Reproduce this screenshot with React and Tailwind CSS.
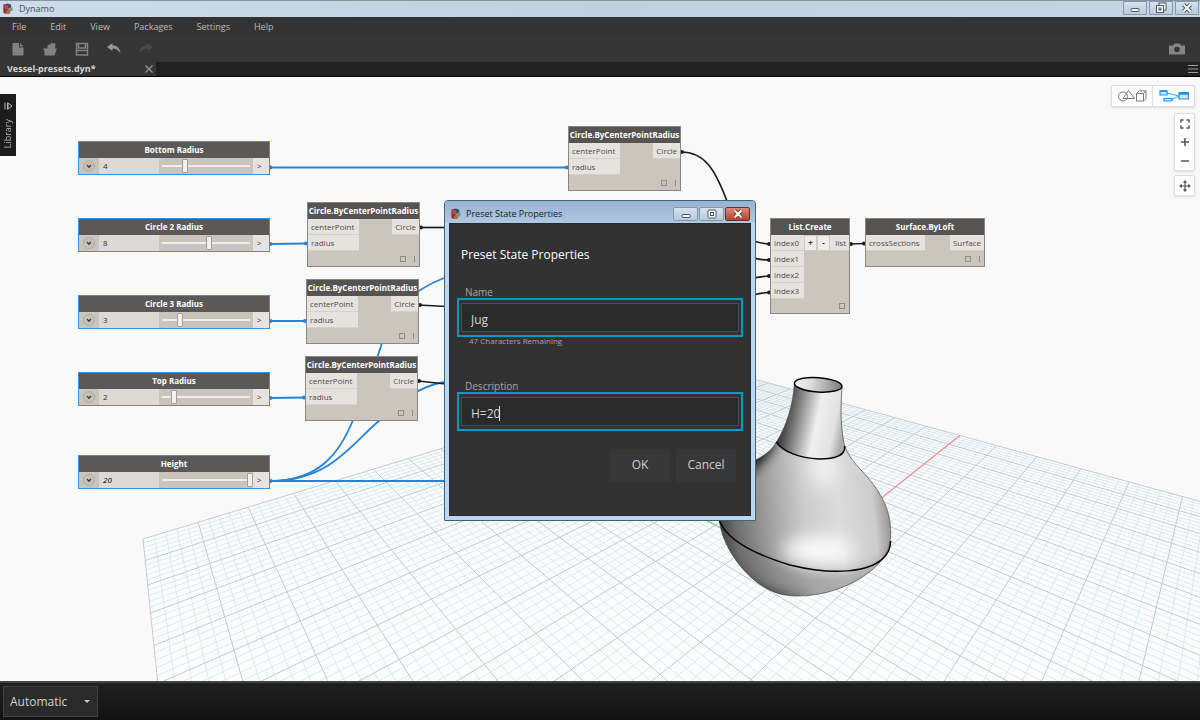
import React, { useState } from "react";

const GRID = { x: 143, y: 539, xu: 65.6, xv: -6.5, yu: 10.63, yv: -12.1, wu: 0.0524, wv: -0.06 };

function project(u, v) {
  const w = 1 + GRID.wu * u + GRID.wv * v;
  const x = (GRID.x + GRID.xu * u + GRID.xv * v) / w;
  const y = (GRID.y + GRID.yu * u + GRID.yv * v) / w;
  return `${x.toFixed(1)},${y.toFixed(1)}`;
}

function gridPath(major) {
  let d = "";
  for (let i = 0; i <= 100; i++) {
    if ((i % 5 === 0) !== major) continue;
    const n = i / 5;
    const vEnd = Math.min(20, (0.75 + GRID.wu * n) / 0.06);
    const uStart = Math.max(0, (0.06 * n - 0.75) / GRID.wu);
    d += `M${project(n, 0)}L${project(n, vEnd)}M${project(uStart, n)}L${project(20, n)}`;
  }
  return d;
}

const MINOR = gridPath(false);
const MAJOR = gridPath(true);

const BODY =
  "M794.3,383.5 C793.5,404 786,427 776.5,442 C766,460 752,457 736,475 C722,491 718,510 719.5,521 C722,549 752,590 785,595 C812,599 846,590 868,573 C883,562 890.7,550 890.7,534 C891,508 880,490 860,469 C849,457 845,449 843.5,441 C840,420 841,402 842,387.5 Z";

function Scene() {
  return (
    <svg className="absolute inset-0 h-full w-full" aria-hidden="true">
      <defs>
        <linearGradient id="body" gradientUnits="userSpaceOnUse" x1="719" y1="530" x2="891" y2="512">
          <stop offset="0" stopColor="#3c3c3c" />
          <stop offset="0.1" stopColor="#6e6e6e" />
          <stop offset="0.28" stopColor="#9c9c9c" />
          <stop offset="0.5" stopColor="#cccccc" />
          <stop offset="0.7" stopColor="#dcdcdc" />
          <stop offset="0.9" stopColor="#cdcdcd" />
          <stop offset="1" stopColor="#8e8e8e" />
        </linearGradient>
        <linearGradient id="neck" gradientUnits="userSpaceOnUse" x1="780" y1="406" x2="846" y2="420">
          <stop offset="0" stopColor="#1c1c1c" />
          <stop offset="0.25" stopColor="#767676" />
          <stop offset="0.58" stopColor="#efefef" />
          <stop offset="0.85" stopColor="#e2e2e2" />
          <stop offset="1" stopColor="#aaaaaa" />
        </linearGradient>
        <linearGradient id="mouth" x1="0" x2="1" y1="0" y2="0">
          <stop offset="0" stopColor="#f4f4f4" />
          <stop offset="0.35" stopColor="#dcdcdc" />
          <stop offset="1" stopColor="#7c7c7c" />
        </linearGradient>
        <filter id="soft" x="-60%" y="-60%" width="220%" height="220%">
          <feGaussianBlur stdDeviation="9" />
        </filter>
        <filter id="softer" x="-60%" y="-60%" width="220%" height="220%">
          <feGaussianBlur stdDeviation="6" />
        </filter>
        <clipPath id="vase">
          <path d={BODY} />
        </clipPath>
      </defs>
      <g transform="translate(0,-77)">
        <path d={`M${project(0, 0)}L${project(20, 0)}L${project(20, 20)}L${project(14, 20)}L${project(0, 12.5)}Z`} fill="#fbfcfc" />
        <path d={MINOR} fill="none" stroke="#d3e4ec" strokeWidth="0.8" />
        <path d={MAJOR} fill="none" stroke="#c0cbd0" strokeWidth="1" />
        <path d={`M${project(10, 10)}L${project(20, 10)}`} stroke="#f48d96" strokeWidth="1.2" />
        <path d={`M${project(10, 10)}L${project(10, 0)}`} stroke="#7fcf86" strokeWidth="1.2" />

        <g clipPath="url(#vase)">
          <path d={BODY} fill="url(#body)" />
          <path d="M716,520 C728,544 760,558 790,567 C830,577 872,576 896,545 L890,610 H710Z" fill="#6a6a6a" opacity="0.4" filter="url(#softer)" />
          <path d="M714,535 C735,580 770,594 815,598 L720,612Z" fill="#222" opacity="0.7" filter="url(#softer)" />
          <path d="M778,438 C770,460 756,466 742,482 L712,510 L716,440Z" fill="#000" opacity="0.85" filter="url(#softer)" />
          <ellipse cx="822" cy="468" rx="14" ry="20" fill="#fff" opacity="0.65" filter="url(#soft)" />
          <ellipse cx="818" cy="550" rx="36" ry="13" fill="#fff" opacity="0.95" filter="url(#soft)" />
          <path d="M794.3,383 C793.5,404 786,427 776.5,442 C783,452 800,458 819,459 C836,459 846,455 844.6,446 L842,387Z" fill="url(#neck)" />
        </g>
        <path d={BODY} fill="none" stroke="#444" strokeWidth="0.7" />
        <path d="M719.5,521 C728,542 760,556 790,565 C830,575 872,574 886,555 C890,550 890.5,545 890.7,541" fill="none" stroke="#050505" strokeWidth="1.5" />
        <path d="M776.3,442 C783,452 800,458 819,459 C836,459 846,455 844.6,446" fill="none" stroke="#050505" strokeWidth="1.5" />
        <ellipse cx="818.2" cy="384.8" rx="23.8" ry="7.2" transform="rotate(4 818 385)" fill="url(#mouth)" stroke="#050505" strokeWidth="1.5" />

        <g fill="none" stroke="#2583d8" strokeWidth="1.8">
          <path d="M270,167.500H568" />
          <path d="M270,244L307,243.5" />
          <path d="M270,321L306,321" />
          <path d="M270,398L305,397.5" />
          <path d="M270,481H460" />
          <path d="M270,481C320,481 340,452 353,420S372,375 382,343C392,312 410,291 444,278" />
          <path d="M270,481C330,481 350,445 380,420C395,407 415,387 444,382" />
        </g>
        <g fill="#2583d8">
          {[167.5, 244, 321, 398, 481].map((y) => (
            <circle key={y} cx="270.5" cy={y} r="2" />
          ))}
          <circle cx="567" cy="167.5" r="2" />
          <circle cx="306" cy="243.5" r="2" />
          <circle cx="305" cy="321" r="2" />
          <circle cx="304" cy="397.5" r="2" />
        </g>
        <g fill="none" stroke="#1d1d1d" strokeWidth="1.7">
          <path d="M681,152C704,152 715,168 728,204" />
          <path d="M420,227.5L446,227.5" />
          <path d="M419,305L446,306.5" />
          <path d="M418,381L446,384" />
          <path d="M754,241C760,243 764,244 770,244" />
          <path d="M754,258C760,260 764,260 770,260" />
          <path d="M754,278C760,277 764,276 770,276" />
          <path d="M754,295C760,293 764,292.500 770,292.500" />
          <path d="M849,244L865,243.500" />
        </g>
        <g fill="#1d1d1d">
          <circle cx="682" cy="152" r="2" />
          <circle cx="421" cy="227.5" r="2" />
          <circle cx="420" cy="305" r="2" />
          <circle cx="419" cy="381" r="2" />
          {[244, 260, 276, 292.5].map((y) => (
            <circle key={y} cx="769" cy={y} r="2" />
          ))}
          <circle cx="851" cy="244" r="2" />
          <circle cx="864" cy="243.500" r="2" />
        </g>
      </g>
    </svg>
  );
}

function AppIcon() {
  return (
    <svg viewBox="0 0 12 13" className="h-3 w-3 shrink-0" aria-hidden="true">
      <path d="M1 1.500L6 .5V7L3 12 1 10.500Z" fill="#9c2a30" />
      <path d="M6 .5L9.500 2V5L6 6.500Z" fill="#3d4f6f" />
      <path d="M6 6.500L11 4.500V8L8 9.500 6 9Z" fill="#6f9a80" />
      <path d="M3 12L6 7 9 9 7.500 12Z" fill="#a8703c" />
      <path d="M1 1.500L6 3V7L3 6.500Z" fill="#c2474f" />
    </svg>
  );
}

const SLIDERS = [
  { name: "Bottom Radius", value: 4, max: 15, at: "left-[78px] top-[64px]" },
  { name: "Circle 2 Radius", value: 8, max: 15, at: "left-[78px] top-[141px]" },
  { name: "Circle 3 Radius", value: 3, max: 15, at: "left-[78px] top-[218px]" },
  { name: "Top Radius", value: 2, max: 15, at: "left-[78px] top-[295px]" },
  { name: "Height", value: 20, max: 20, italic: true, at: "left-[78px] top-[378px]" },
];

function SliderNode({ name, value, max, italic, at }) {
  const [current, setCurrent] = useState(value);
  return (
    <section className={`absolute w-48 border border-[#3b93e0] bg-[#cac4bc] ${at}`}>
      <h2 className="h-4 bg-[#5b5957] text-center text-[8px] leading-4 font-bold text-white">{name}</h2>
      <div className="flex h-4 text-[8px] text-[#2c2c2c]">
        <button aria-label={`${name} settings`} className="flex w-5 items-center justify-center">
          <svg viewBox="0 0 12 12" className="h-3 w-3">
            <circle cx="6" cy="6" r="5.5" fill="#c6c0b9" stroke="#aaa49d" strokeWidth="0.7" />
            <path d="M4 5L6 7.200 8 5" fill="none" stroke="#3a3a3a" strokeWidth="1.300" />
          </svg>
        </button>
        <output className={`w-15 bg-[#dddad6] pl-1 leading-4 ${italic ? "italic text-black" : ""}`}>{current}</output>
        <input
          type="range"
          aria-label={name}
          min="0"
          max={max}
          value={current}
          onChange={(e) => setCurrent(Number(e.target.value))}
          className="h-4 min-w-0 flex-1 appearance-none bg-[linear-gradient(#f0eeec,#f0eeec)] bg-[length:88px_2px] bg-center bg-no-repeat [&::-webkit-slider-thumb]:h-[14px] [&::-webkit-slider-thumb]:w-[6px] [&::-webkit-slider-thumb]:appearance-none [&::-webkit-slider-thumb]:rounded-[1px] [&::-webkit-slider-thumb]:border [&::-webkit-slider-thumb]:border-[#a19d99] [&::-webkit-slider-thumb]:bg-[#f1f0ef]"
        />
        <span className="w-4 bg-[#e5e2df] pl-1 leading-4">&gt;</span>
      </div>
    </section>
  );
}

function Port({ children, className = "" }) {
  return (
    <div className={`h-4 border-b border-[#d5d0ca] bg-[#e6e3df] px-[3px] text-[8px] leading-4 whitespace-nowrap text-[#4a4a4a] ${className}`}>
      {children}
    </div>
  );
}

function NodeCard({ title, at, children, lacing = true }) {
  return (
    <section className={`absolute flex flex-col border border-[#8a8681] bg-[#cac5bd] ${at}`}>
      <h2 className="h-4 shrink-0 bg-[#565452] text-center text-[8px] leading-4 font-bold whitespace-nowrap text-white">{title}</h2>
      <div className="flex items-start justify-between">{children}</div>
      <div className="mt-auto flex h-[14px] items-center justify-end gap-2 pr-1">
        <input type="checkbox" aria-label={`${title} preview`} className="h-[6px] w-[6px] appearance-none border border-[#8f8b86]" />
        {lacing && <span className="h-[6px] w-px bg-[#8f8b86]" />}
      </div>
    </section>
  );
}

const CIRCLES = [
  "left-[568px] top-[49px] w-[113px] h-[65px]",
  "left-[307px] top-[125px] w-[113px] h-[65px]",
  "left-[306px] top-[202px] w-[113px] h-[65px]",
  "left-[305px] top-[279px] w-[113px] h-[65px]",
];

function CircleNode({ at }) {
  return (
    <NodeCard title="Circle.ByCenterPointRadius" at={at}>
      <div className="w-[51px]">
        <Port>centerPoint</Port>
        <Port>radius</Port>
      </div>
      <Port>Circle</Port>
    </NodeCard>
  );
}

const TOOLS = [
  {
    label: "New",
    tone: "text-[#828282]",
    art: <path d="M1.500 1H8V5.500H12.500V13.500H1.500ZM9 1L12.500 4.500H9Z" fill="currentColor" />,
  },
  {
    label: "Open",
    tone: "text-[#828282]",
    art: <path d="M4.500 3L7.500 2.500 8 1 12.500 1.500 12 6.500H14L11.500 13.500H1.500V9.500L0 6.500H4.500Z" fill="currentColor" />,
  },
  {
    label: "Save",
    tone: "text-[#828282]",
    art: <path d="M1.500 1.500H12.500V13H1.500ZM3.500 1.500V6H10.500V1.500M1.500 8.500H12.500" fill="none" stroke="currentColor" strokeWidth="1.500" />,
  },
  {
    label: "Undo",
    tone: "text-[#9a9a9a]",
    art: <path d="M0 5L5.500 1V3.500C10 3.500 13 6 13.500 11.500C11.500 8 9.500 6.500 5.500 6.500V9Z" fill="currentColor" />,
  },
  {
    label: "Redo",
    tone: "text-[#4b4b4b]",
    art: <path d="M14 5L8.500 1V3.500C4 3.500 1 6 .5 11.500C2.500 8 4.500 6.500 8.500 6.500V9Z" fill="currentColor" />,
  },
];

const WINDOW_BUTTON = "flex items-center justify-center border border-[#8797ab] bg-linear-to-b from-[#d6e2ee] to-[#b9cadc]";

function Glyph({ kind, stroke = "#4d5765" }) {
  return (
    <svg viewBox="0 0 12 12" className="h-3 w-3" fill="none" stroke={stroke} aria-hidden="true">
      {kind === "min" && <rect x="2" y="6.500" width="8" height="3" rx="0.500" fill="#fff" />}
      {kind === "max" && (
        <>
          <rect x="2" y="2" width="8" height="8" rx="1" fill="#fff" />
          <rect x="4.500" y="4.500" width="3" height="3" />
        </>
      )}
      {kind === "restore" && (
        <>
          <rect x="4" y="1" width="7" height="7" fill="#fff" />
          <rect x="1.500" y="3.500" width="7" height="7" fill="#fff" />
          <rect x="4" y="6" width="2" height="2" />
        </>
      )}
      {kind === "close" && (
        <>
          <path d="M2.500 2.500L9.500 9.500M9.500 2.500L2.500 9.500" strokeWidth="4" />
          <path d="M2.500 2.500L9.500 9.500M9.500 2.500L2.500 9.500" stroke="#fff" strokeWidth="2" />
        </>
      )}
    </svg>
  );
}

function Header() {
  return (
    <header className="shrink-0">
      <div className="flex h-[17px] items-center border-t border-[#8a939c] bg-linear-to-r from-[#cddcea] via-[#bfd0e1] to-[#c4d5e6] pr-px pl-[2px]">
        <AppIcon />
        <span className="ml-[5px] text-[9px] leading-4 text-[#44505c]">Dynamo</span>
        <div className="ml-auto flex h-[14px] gap-[2px] self-start">
          <button aria-label="Minimize" className={`w-6 ${WINDOW_BUTTON}`}><Glyph kind="min" /></button>
          <button aria-label="Restore" className={`w-6 ${WINDOW_BUTTON}`}><Glyph kind="restore" /></button>
          <button aria-label="Close" className={`w-6 ${WINDOW_BUTTON}`}><Glyph kind="close" /></button>
        </div>
      </div>
      <nav className="flex h-[18px] items-center gap-6 bg-[#333] pt-px pl-3 text-[9px] text-[#bcbcbc]">
        {["File", "Edit", "View", "Packages", "Settings", "Help"].map((m) => (
          <button key={m}>{m}</button>
        ))}
      </nav>
      <div className="flex h-[27px] items-center gap-[18px] bg-[#353535] pt-px pr-[14px] pl-[11px]">
        {TOOLS.map((t) => (
          <button key={t.label} aria-label={t.label} className={t.tone}>
            <svg viewBox="0 0 14 14" className="h-[14px] w-[14px]">{t.art}</svg>
          </button>
        ))}
        <button aria-label="Export image" className="ml-auto text-[#858585]">
          <svg viewBox="0 0 18 12" className="h-3 w-[18px]">
            <path d="M1 2.500H5L6.500 .5H11.500L13 2.500H17V11.500H1Z" fill="currentColor" />
            <circle cx="9" cy="6.500" r="2.800" fill="#353535" />
          </svg>
        </button>
      </div>
      <div className="flex h-[15px] items-center border-b border-black bg-[#212121]">
        <div className="flex h-full w-[156px] items-center justify-between bg-[#353535] pr-[2px] pl-[7px]">
          <button className="text-[9px] leading-[14px] font-bold text-[#d4d4d4]">Vessel-presets.dyn*</button>
          <button aria-label="Close tab" className="text-[#969696]">
            <svg viewBox="0 0 10 10" className="h-[10px] w-[10px]">
              <path d="M1.500 1.500L8.500 8.500M8.500 1.500L1.500 8.500" stroke="currentColor" strokeWidth="1.300" />
            </svg>
          </button>
        </div>
        <button aria-label="Tab list" className="mr-[2px] ml-auto text-[#9a9a9a]">
          <svg viewBox="0 0 10 10" className="h-[10px] w-[10px]">
            <path d="M0 1.500H10M0 5H10M0 8.500H10" stroke="currentColor" strokeWidth="1" />
          </svg>
        </button>
      </div>
    </header>
  );
}

function ViewControls() {
  const panel = "flex flex-col items-center rounded-[2px] border border-[#dedede] bg-white shadow-sm w-[21px]";
  return (
    <div className="absolute top-2 right-[5px] flex flex-col items-end">
      <div className="flex h-[22px] rounded-[2px] border border-[#dedede] bg-white shadow-sm">
        <button aria-label="Geometry view" className="flex w-[41px] items-center justify-center border-r border-[#dedede]">
          <svg viewBox="0 0 30 14" className="h-[14px] w-[30px]" fill="none" stroke="#777" strokeWidth="1">
            <circle cx="6" cy="7.500" r="4.500" />
            <path d="M11.500 1.500L17.500 9.500H6ZM19.500 4.500H26.500V12H19.500ZM19.500 4.500L22 1.800H29L26.500 4.500M29 1.800V9.500L26.500 12" />
          </svg>
        </button>
        <button aria-label="Graph view" className="flex w-[41px] items-center justify-center">
          <svg viewBox="0 0 30 14" className="h-[14px] w-[30px]" fill="none" stroke="#1a93ee" strokeWidth="1.200">
            <path d="M1 1.800H8V6H1ZM5 9.500H13V12H5ZM20 3.500H29.500V10H20Z" fill="#cfe8fb" />
            <path d="M1 2.200H8M20 4H29.500M20 5H29.500" strokeWidth="1.600" />
            <path d="M8 4L20 7M13 10.500L20 7" strokeWidth="0.900" />
          </svg>
        </button>
      </div>
      <div className={`mt-[6px] h-[58px] justify-around pt-px ${panel}`}>
        <button aria-label="Fit to screen">
          <svg viewBox="0 0 10 10" className="h-[10px] w-[10px]" fill="none" stroke="#555" strokeWidth="1.500">
            <path d="M1 3.500V1H3.500M6.500 1H9V3.500M9 6.500V9H6.500M3.500 9H1V6.500" />
          </svg>
        </button>
        <button aria-label="Zoom in">
          <svg viewBox="0 0 10 10" className="h-[10px] w-[10px]" stroke="#555" strokeWidth="1.600">
            <path d="M1 5H9M5 1V9" />
          </svg>
        </button>
        <button aria-label="Zoom out">
          <svg viewBox="0 0 10 10" className="h-[10px] w-[10px]" stroke="#555" strokeWidth="1.500">
            <path d="M1 5H9" />
          </svg>
        </button>
      </div>
      <div className={`mt-1 h-[21px] justify-center ${panel}`}>
        <button aria-label="Pan">
          <svg viewBox="0 0 12 12" className="h-3 w-3" fill="#555" stroke="#555">
            <path d="M6 2V10M2 6H10" strokeWidth="1.200" />
            <path d="M6 0L8.200 2.800H3.800ZM6 12L8.200 9.200H3.800ZM0 6L2.800 3.800V8.200ZM12 6L9.200 3.800V8.200Z" stroke="none" />
          </svg>
        </button>
      </div>
    </div>
  );
}

function FramedInput({ id, value, onChange, caret }) {
  return (
    <div className="relative -mx-px border-2 border-[#0898c6] px-[2px] py-[3px]">
      <input
        id={id}
        value={value}
        onChange={onChange}
        className="block h-[29px] w-full border border-[#4c4c4c] bg-[#2a2a2a] px-[9px] pt-1 text-[12px] text-[#d6d6d6] outline-none"
      />
      {caret && <span className="absolute top-3 left-10 h-[15px] w-px bg-[#e8e8e8]" />}
    </div>
  );
}

function PresetDialog() {
  const [name, setName] = useState("Jug");
  const [description, setDescription] = useState("H=20");
  return (
    <div className="pointer-events-none fixed inset-0 flex items-center justify-center">
      <div
        role="dialog"
        aria-labelledby="preset-title"
        className="pointer-events-auto w-[312px] rounded-t-[4px] border border-[#3f6672] bg-[#bad6f0] px-1 pb-1"
      >
        <div className="-mx-1 flex h-[22px] items-center rounded-t-[3px] bg-linear-to-b from-[#97b3d2] to-[#b1c8e2] px-[5px] pt-1">
          <AppIcon />
          <span className="ml-1 flex-1 text-[9px] text-[#15202b]">Preset State Properties</span>
          <div className="flex h-[14px] gap-px">
            <button aria-label="Minimize dialog" className={`w-[25px] rounded-[2px] ${WINDOW_BUTTON}`}><Glyph kind="min" /></button>
            <button aria-label="Maximize dialog" className={`w-[25px] rounded-[2px] ${WINDOW_BUTTON}`}><Glyph kind="max" /></button>
            <button aria-label="Close dialog" className="flex w-[25px] items-center justify-center rounded-[2px] border border-[#6f2a25] bg-linear-to-b from-[#dd8a7c] to-[#bd3e2b]">
              <Glyph kind="close" stroke="#6e3a38" />
            </button>
          </div>
        </div>
        <form className="flex flex-col border border-[#1f2a33] bg-[#323232] px-2 pb-[33px]" onSubmit={(e) => e.preventDefault()}>
          <h1 id="preset-title" className="mt-[22px] ml-[3px] text-[12px] leading-[18px] text-white">Preset State Properties</h1>
          <label htmlFor="preset-name" className="mt-[22px] ml-[7px] text-[10px] leading-3 text-[#a6a6a6]">Name</label>
          <FramedInput id="preset-name" value={name} onChange={(e) => setName(e.target.value)} />
          <p className="ml-[11px] text-[8px] leading-2 text-[#a6a6a6]">{50 - name.length} Characters Remaining</p>
          <label htmlFor="preset-description" className="mt-[35px] ml-[7px] text-[10px] leading-3 text-[#a6a6a6]">Description</label>
          <FramedInput id="preset-description" value={description} onChange={(e) => setDescription(e.target.value)} caret />
          <div className="mt-[18px] mr-[6px] flex justify-end gap-[6px]">
            <button type="submit" className="h-[33px] w-15 bg-[#373737] text-[12px] text-[#cfcfcf]">OK</button>
            <button type="button" className="h-[33px] w-15 bg-[#373737] text-[12px] text-[#cfcfcf]">Cancel</button>
          </div>
        </form>
      </div>
    </div>
  );
}

export default function App() {
  return (
    <div className="flex h-screen flex-col overflow-hidden bg-[#f9f9f9] font-['Open_Sans','Noto_Sans',sans-serif]">
      <Header />
      <main className="relative flex-1 overflow-hidden">
        <Scene />
        {SLIDERS.map((s) => (
          <SliderNode key={s.name} {...s} />
        ))}
        {CIRCLES.map((at) => (
          <CircleNode key={at} at={at} />
        ))}
        <NodeCard title="List.Create" at="left-[770px] top-[141px] w-[80px] h-[96px]" lacing={false}>
          <div className="w-[33px]">
            {[0, 1, 2, 3].map((i) => (
              <Port key={i}>index{i}</Port>
            ))}
          </div>
          <div className="flex flex-1">
            <button aria-label="Add input" className="w-[13px] border border-[#cfcac4] bg-[#efedeb] text-[8px] leading-3 font-bold text-[#333]">+</button>
            <button aria-label="Remove input" className="w-[13px] border border-[#cfcac4] bg-[#efedeb] text-[8px] leading-3 font-bold text-[#333]">-</button>
            <Port className="flex-1 text-right">list</Port>
          </div>
        </NodeCard>
        <NodeCard title="Surface.ByLoft" at="left-[865px] top-[141px] w-[120px] h-[49px]">
          <Port className="w-[59px]">crossSections</Port>
          <Port>Surface</Port>
        </NodeCard>
        <button className="absolute top-[17px] left-0 flex h-[62px] w-4 flex-col items-center justify-between bg-[#1c1c1c] py-2 text-[#b5b5b5]">
          <svg viewBox="0 0 9 8" className="h-2 w-[9px]" fill="none" stroke="currentColor" strokeWidth="1">
            <path d="M1 .5V7.500M3.500 .5V7.500M4 1L8 4 4 7Z" />
          </svg>
          <span className="rotate-180 text-[9px] leading-3 [writing-mode:vertical-rl]">Library</span>
        </button>
        <ViewControls />
      </main>
      <footer className="flex h-[39px] shrink-0 items-center border-t-2 border-[#444] bg-linear-to-b from-[#202020] to-[#121212] px-[3px]">
        <div className="relative">
          <select aria-label="Run mode" className="h-[31px] w-[95px] appearance-none border border-[#414141] bg-[#2a2a2a] pl-[6px] text-[12px] text-[#d2d2d2]">
            <option>Automatic</option>
            <option>Manual</option>
          </select>
          <svg viewBox="0 0 6 3" className="pointer-events-none absolute top-[14px] right-2 h-[3px] w-[6px]">
            <path d="M0 0H6L3 3Z" fill="#c8c8c8" />
          </svg>
        </div>
      </footer>
      <PresetDialog />
    </div>
  );
}
